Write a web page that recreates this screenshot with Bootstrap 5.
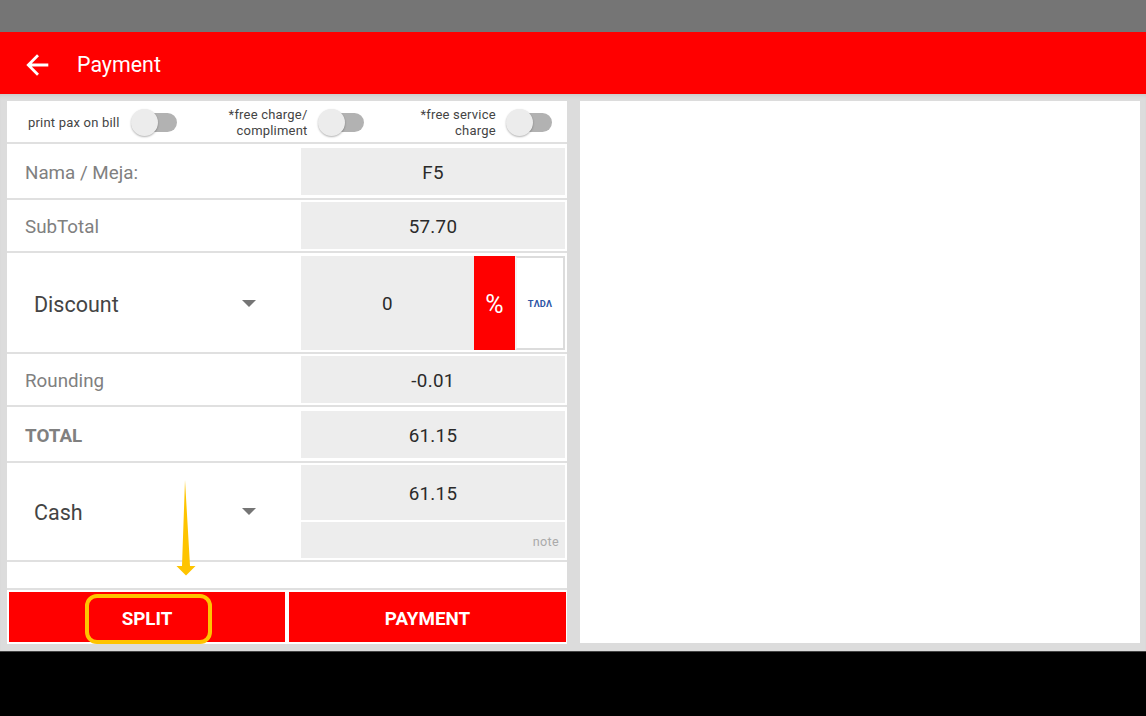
<!DOCTYPE html>
<html lang="en">
<head>
  <meta charset="UTF-8" />
  <meta name="viewport" content="width=device-width, initial-scale=1.0"/>
  <title>Payment</title>
  <link href="https://cdn.jsdelivr.net/npm/bootstrap@5.3.3/dist/css/bootstrap.min.css" rel="stylesheet">
  <style>
    body {
      font-family: Roboto, sans-serif;
      font-size: 18.8px;
      line-height: 1.2;
      color: #2a2a2a;
      background: #000;
      height: 716px;
      overflow: hidden;
    }
    .status-strip { height: 32px; background: #757575; }
    .app-bar {
      height: 62px;
      padding: 3px 0 0 26px;
      gap: 28px;
      background: #f00;
      font-size: 21.4px;
    }
    .workspace {
      height: 558px;
      padding: 7px 6px 8px 7px;
      gap: 13px;
      background: #dcdcdc;
      border-bottom: 1px solid #444;
      box-shadow: inset 0 4px 4px -3px #c4c4c4;
    }
    .pane { width: 560px; background: #fff; }
    .pane-left { height: 543px; }
    .pane-right { height: 542px; }

    .line-row { border-bottom: 2px solid #e0e0e0; }
    .line-label { width: 294px; padding: 4px 0 0 18px; color: #808080; }
    .line-value { width: 264px; background: #ededed; letter-spacing: .3px; }
    .text-cell { padding-top: 3px; }
    .h-options { height: 43px; padding: 2px 0 0 21px; }
    .h-short { height: 53px; padding-top: 2px; padding-bottom: 2px; }
    .h-mid { height: 56px; padding-top: 4px; padding-bottom: 3px; }
    .h-discount { height: 101px; padding: 3px 0 2px; }
    .h-cash { height: 99px; padding: 2px 0; }
    .h-blank { height: 28px; }

    .picker { padding: 3px 45px 0 27px; font-size: 21.5px; color: #444; }
    .picker svg { margin-top: -3px; }
    .percent-btn { width: 41px; padding-top: 3px; background: #f00; font-size: 25px; letter-spacing: 0; }
    .tada-btn {
      width: 50px;
      padding-top: 1px;
      background: #fff;
      border: 2px solid #dcdcdc;
      border-left-color: #f4f4f4;
    }
    .tada-logo { font: 700 9.3px/1 Roboto, sans-serif; color: #2d55a5; letter-spacing: .2px; }
    .cash-cells { gap: 2px; }
    .note-box { height: 36px; padding: 3px 6px 0 0; font-size: 12.6px; color: #aaa; }

    .option { gap: 11px; font-size: 13px; line-height: 16px; color: #444; letter-spacing: .2px; }
    .option + .option { margin-left: 52px; }
    .option + .option + .option { margin-left: 56px; gap: 10px; }
    .switch {
      width: 46px;
      height: 28px;
      padding: 4.5px 0 4.5px 15px;
    }
    .switch-track { height: 19px; border-radius: 0 10px 10px 0; background: #b2b2b2; }
    .switch-thumb {
      left: 0;
      top: 0;
      width: 27px;
      height: 27px;
      border-radius: 50%;
      background: #ececec;
      box-shadow: 0 1px 2px rgba(0, 0, 0, .3);
    }

    .actions { padding: 2px 1px 2px 2px; gap: 4px; }
    .action-btn {
      height: 50px;
      padding: 4px 0 0;
      border: 0;
      background: #f00;
      color: #fff;
      font-size: 18.8px;
      font-weight: 700;
    }
    .split-btn { width: 276px; }
    .marker-box {
      left: 78px;
      bottom: 0;
      width: 127px;
      height: 50px;
      border: 4px solid #fec400;
      border-radius: 12px;
    }
    .marker-arrow { left: 169px; top: 379px; }
  </style>
</head>
<body>
  <div class="status-strip"></div>
  <header class="app-bar d-flex align-items-center text-white">
    <svg width="23" height="22" viewBox="0 0 23 22" fill="none" stroke="#fff" stroke-width="2.8">
      <path d="M22.3 11H2.5M12 1.3L2.3 11l9.7 9.7"/>
    </svg>
    <span>Payment</span>
  </header>

  <main class="workspace d-flex align-items-start">
    <section class="pane pane-left position-relative d-flex flex-column">
      <div class="line-row h-options d-flex align-items-center">
        <div class="option d-flex align-items-center">
          <span class="text-end">print pax on bill</span>
          <div class="switch position-relative"><div class="switch-track"></div><div class="switch-thumb position-absolute"></div></div>
        </div>
        <div class="option d-flex align-items-center">
          <span class="text-end">*free charge/<br>compliment</span>
          <div class="switch position-relative"><div class="switch-track"></div><div class="switch-thumb position-absolute"></div></div>
        </div>
        <div class="option d-flex align-items-center">
          <span class="text-end">*free service<br>charge</span>
          <div class="switch position-relative"><div class="switch-track"></div><div class="switch-thumb position-absolute"></div></div>
        </div>
      </div>

      <div class="line-row h-mid d-flex">
        <div class="line-label d-flex align-items-center">Nama / Meja:</div>
        <div class="line-value text-cell d-flex align-items-center justify-content-center">F5</div>
      </div>
      <div class="line-row h-short d-flex">
        <div class="line-label d-flex align-items-center">SubTotal</div>
        <div class="line-value text-cell d-flex align-items-center justify-content-center">57.70</div>
      </div>
      <div class="line-row h-discount d-flex">
        <div class="line-label picker d-flex align-items-center justify-content-between">
          <span>Discount</span>
          <svg width="14" height="7" viewBox="0 0 14 7"><path d="M0 0h14L7 7z" fill="#757575"/></svg>
        </div>
        <div class="line-value d-flex">
          <div class="text-cell flex-grow-1 d-flex align-items-center justify-content-center">0</div>
          <div class="percent-btn d-flex align-items-center justify-content-center text-white">%</div>
          <div class="tada-btn d-flex align-items-center justify-content-center"><span class="tada-logo">TΛDΛ</span></div>
        </div>
      </div>
      <div class="line-row h-short d-flex">
        <div class="line-label d-flex align-items-center">Rounding</div>
        <div class="line-value text-cell d-flex align-items-center justify-content-center">-0.01</div>
      </div>
      <div class="line-row h-mid d-flex">
        <div class="line-label d-flex align-items-center fw-bold">TOTAL</div>
        <div class="line-value text-cell d-flex align-items-center justify-content-center">61.15</div>
      </div>
      <div class="line-row h-cash d-flex">
        <div class="line-label picker d-flex align-items-center justify-content-between">
          <span>Cash</span>
          <svg width="14" height="7" viewBox="0 0 14 7"><path d="M0 0h14L7 7z" fill="#757575"/></svg>
        </div>
        <div class="cash-cells d-flex flex-column">
          <div class="line-value text-cell flex-grow-1 d-flex align-items-center justify-content-center">61.15</div>
          <div class="line-value note-box d-flex align-items-center justify-content-end">note</div>
        </div>
      </div>
      <div class="line-row h-blank"></div>

      <div class="actions d-flex">
        <button type="button" class="action-btn split-btn">SPLIT</button>
        <button type="button" class="action-btn flex-grow-1">PAYMENT</button>
      </div>

      <div class="marker-box position-absolute"></div>
      <svg class="marker-arrow position-absolute" width="20" height="96" viewBox="0 0 20 96">
        <path d="M9 0L14 86h5.5L10 95.5.5 86H6z" fill="#fec400"/>
      </svg>
    </section>
    <section class="pane pane-right"></section>
  </main>
  <script src="https://cdn.jsdelivr.net/npm/bootstrap@5.3.3/dist/js/bootstrap.bundle.min.js"></script>
</body>
</html>
